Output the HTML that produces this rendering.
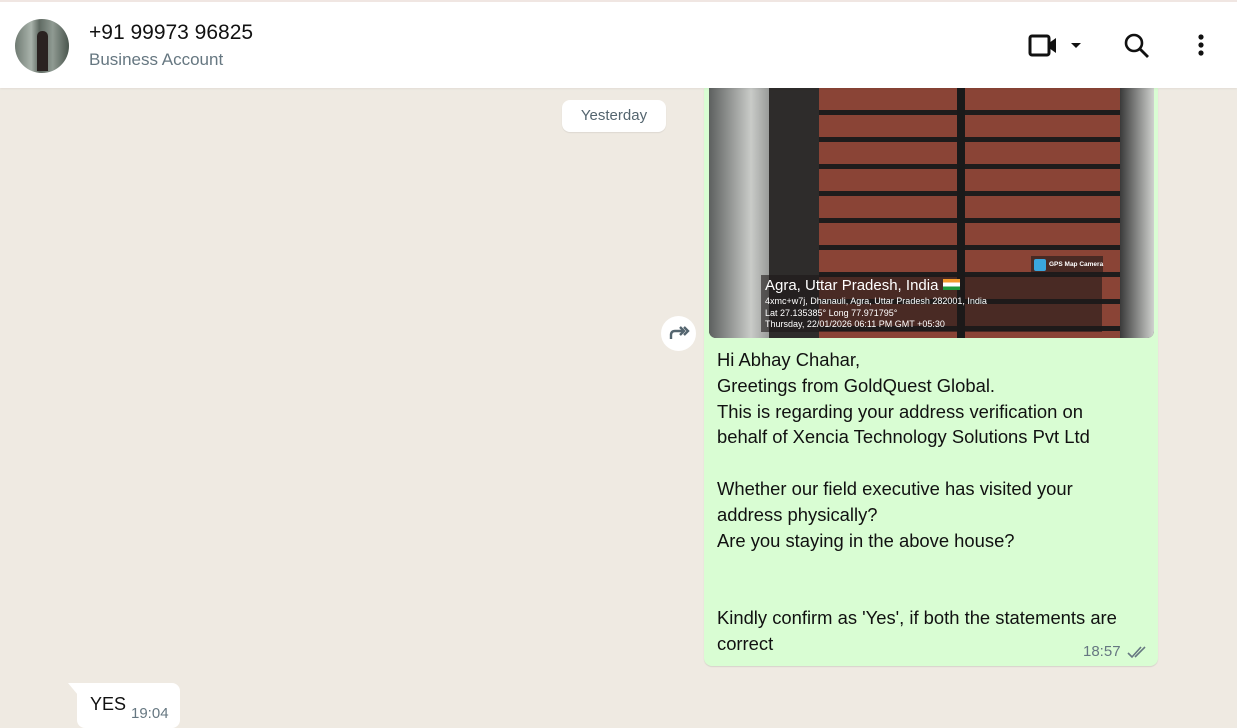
<!DOCTYPE html>
<html><head><meta charset="utf-8"><style>
*{margin:0;padding:0;box-sizing:border-box}
body{width:1237px;height:723px;overflow:hidden;background:#efeae2;font-family:"Liberation Sans",sans-serif;position:relative}
.hdr{position:absolute;left:0;top:0;width:1237px;height:88px;background:#fff;border-top:2px solid #f0e6e2;box-shadow:0 1px 2px rgba(0,0,0,.06);z-index:2}
.av{position:absolute;left:15px;top:17px;width:54px;height:54px;border-radius:50%;background:linear-gradient(90deg,#6f7a72,#a9b3ab 30%,#5f6a62 45%,#8f9a92 70%,#4a554d);overflow:hidden}
.av:after{content:"";position:absolute;left:22px;top:12px;width:11px;height:40px;background:#2a2220;border-radius:5px 5px 0 0}
.name{position:absolute;left:89px;top:19px;font-size:21px;color:#111}
.sub{position:absolute;left:89px;top:48px;font-size:17px;color:#667781}
.date{position:absolute;left:562px;top:100px;width:104px;height:32px;background:#fff;border-radius:8px;font-size:15px;color:#54656f;text-align:center;line-height:32px;box-shadow:0 1px 1px rgba(0,0,0,.08)}
.bub{position:absolute;left:704px;top:88px;width:454px;height:578px;background:#d9fdd3;border-radius:0 0 8px 8px;box-shadow:0 1px 1px rgba(0,0,0,.1)}
.img{position:absolute;left:709px;top:88px;width:445px;height:250px;border-radius:0 0 7px 7px;overflow:hidden;background:#3a3a3a}
.door{position:absolute;top:0;height:250px;background:repeating-linear-gradient(180deg,#8a4436 0 22px,#1e1c1c 22px 27px)}
.cap{position:absolute;left:52px;top:187px;width:341px;height:57px;background:rgba(30,25,25,.6);color:#fff}
.txt{position:absolute;left:717px;top:347px;font-size:18.4px;line-height:25.8px;color:#111;white-space:pre}
.tm{position:absolute;left:1083px;top:643px;font-size:15px;color:#667781}
.fw{position:absolute;left:661px;top:316px;width:35px;height:35px;border-radius:50%;background:#fff}
.yes{position:absolute;left:77px;top:683px;width:103px;height:45px;background:#fff;border-radius:0 8px 8px 8px}
</style></head><body>
<div class="hdr">
<div class="av"></div>
<div class="name">+91 99973 96825</div>
<div class="sub">Business Account</div>
<svg style="position:absolute;left:1028px;top:31px" width="60" height="26" viewBox="0 0 60 26"><rect x="2" y="3" width="19" height="19" rx="2" fill="none" stroke="#111" stroke-width="3"/><path d="M21 10 L28 5 V20 L21 15Z" fill="#111"/><path d="M43 10 H53 L48 15Z" fill="#111"/></svg>
<svg style="position:absolute;left:1124px;top:31px" width="26" height="26" viewBox="0 0 26 26"><circle cx="10" cy="10" r="8" fill="none" stroke="#111" stroke-width="2.6"/><path d="M16 16 L24 24" stroke="#111" stroke-width="2.8"/></svg>
<svg style="position:absolute;left:1195px;top:31px" width="12" height="26" viewBox="0 0 12 26"><circle cx="6" cy="4" r="2.6" fill="#111"/><circle cx="6" cy="12" r="2.6" fill="#111"/><circle cx="6" cy="20" r="2.6" fill="#111"/></svg>
</div>
<div class="date">Yesterday</div>
<div class="bub"></div>
<div class="img">
<div style="position:absolute;left:0;top:0;width:60px;height:250px;background:linear-gradient(90deg,#5d605f,#c9cbc8 70%,#9a9c9a)"></div>
<div style="position:absolute;left:60px;top:0;width:60px;height:250px;background:#2e2c2b"></div>
<div class="door" style="left:110px;width:140px"></div>
<div style="position:absolute;left:248px;top:0;width:8px;height:250px;background:#1a1a1a"></div>
<div class="door" style="left:256px;width:160px"></div>
<div style="position:absolute;left:411px;top:0;width:34px;height:250px;background:linear-gradient(90deg,#3a3a3a,#d0d2cf)"></div>
<div style="position:absolute;left:322px;top:168px;width:72px;height:18px;background:rgba(30,25,25,.6);font-size:6.5px;color:#fff;line-height:18px;padding-left:18px;font-weight:bold;white-space:nowrap">GPS Map Camera<span style="position:absolute;left:3px;top:3px;width:12px;height:12px;background:#3aa6dd;border-radius:2px"></span></div>
<div class="cap">
<div style="position:absolute;left:4px;top:2px;font-size:15px">Agra, Uttar Pradesh, India <span style="display:inline-block;width:17px;height:11px;background:linear-gradient(#f49a2c 33%,#fff 33% 66%,#1f9a3a 66%)"></span></div>
<div style="position:absolute;left:4px;top:21px;font-size:9px;line-height:11.5px">4xmc+w7j, Dhanauli, Agra, Uttar Pradesh 282001, India<br>Lat 27.135385° Long 77.971795°<br>Thursday, 22/01/2026 06:11 PM GMT +05:30</div>
</div>
</div>
<div class="txt">Hi Abhay Chahar,
Greetings from GoldQuest Global.
This is regarding your address verification on
behalf of Xencia Technology Solutions Pvt Ltd

Whether our field executive has visited your
address physically?
Are you staying in the above house?


Kindly confirm as 'Yes', if both the statements are
correct</div>
<div class="tm">18:57</div>
<svg style="position:absolute;left:1127px;top:645px" width="22" height="14" viewBox="0 0 22 14"><path d="M1 8 L5 12 L14 2 M8 12 L18 2" fill="none" stroke="#667781" stroke-width="1.6"/></svg>
<div class="fw"><svg width="35" height="35" viewBox="0 0 35 35"><path d="M10 23 V19 Q10 15 14 15 H22" fill="none" stroke="#54656f" stroke-width="2.4"/><path d="M19 11 L23 15 L19 19 M23 11 L27 15 L23 19" fill="none" stroke="#54656f" stroke-width="2.4"/></svg></div>
<svg style="position:absolute;left:68px;top:683px" width="10" height="12"><path d="M0 0 H10 V12Z" fill="#fff"/></svg>
<div class="yes"><span style="position:absolute;left:13px;top:11px;font-size:18px;color:#111">YES</span><span style="position:absolute;left:54px;top:22px;font-size:15px;color:#667781">19:04</span></div>
</body></html>
